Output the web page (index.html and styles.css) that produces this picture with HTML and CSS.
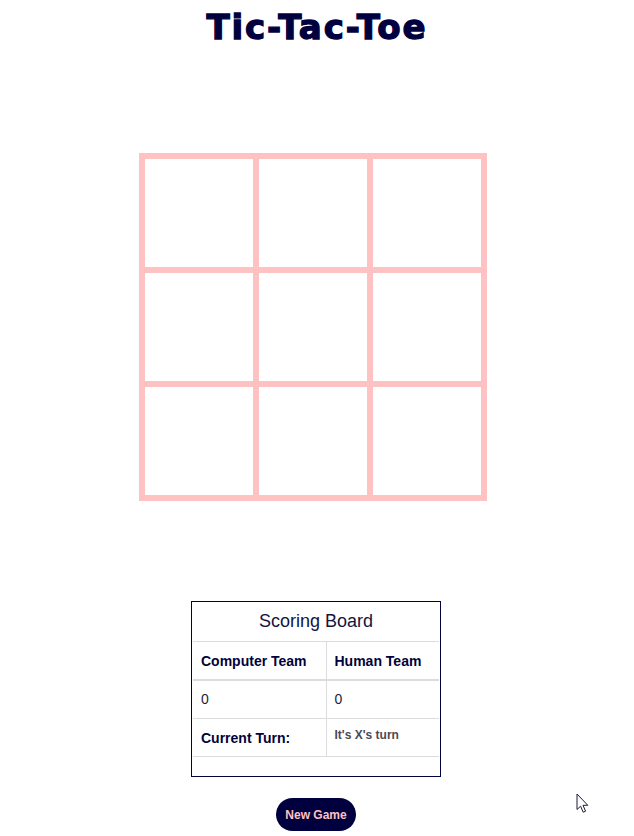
FILE: index.html
```html
<!DOCTYPE html>
<html lang="en">
<head>
<meta charset="utf-8">
<title>Tic-Tac-Toe</title>
<link rel="stylesheet" href="styles.css">
</head>
<body>
<h1 class="title">Tic-Tac-Toe</h1>
<div class="board">
  <div class="cell"></div><div class="cell"></div><div class="cell"></div>
  <div class="cell"></div><div class="cell"></div><div class="cell"></div>
  <div class="cell"></div><div class="cell"></div><div class="cell"></div>
</div>
<div class="score">
  <div class="score-title">Scoring Board</div>
  <table class="score-table">
    <colgroup><col class="col-a"><col class="col-b"></colgroup>
    <thead>
      <tr><th>Computer Team</th><th>Human Team</th></tr>
    </thead>
    <tbody>
      <tr><td>0</td><td>0</td></tr>
      <tr class="last"><th>Current Turn:</th><td class="turn">It's X's turn</td></tr>
    </tbody>
  </table>
</div>
<div class="actions"><button class="new-game">New Game</button></div>
<svg class="cursor" width="14" height="21" viewBox="0 0 14 21"><path d="M1 1 L1 16.5 L4.6 13.2 L7.2 19.2 L9.6 18.2 L7 12.3 L11.8 12.3 Z" fill="#fff" stroke="#1a1a3a" stroke-width="1" stroke-linejoin="miter"/></svg>
</body>
</html>
```

FILE: styles.css
```css
html, body {
  margin: 0;
  padding: 0;
  background: #fff;
}
body {
  font-family: "Liberation Sans", Arial, sans-serif;
  color: #02023a;
  position: relative;
  min-height: 836px;
}
.title {
  margin: 7px 0 0;
  font-family: "DejaVu Sans", "Liberation Sans", sans-serif;
  font-weight: 700;
  font-size: 34px;
  line-height: 40px;
  letter-spacing: 1.9px;
  text-align: center;
  color: #00003e;
  -webkit-text-stroke: 1.3px #00003e;
}
.board {
  width: 336px;
  margin: 106px 0 0 calc(50% - 178px);
  padding: 6px;
  background: #ffc2c2;
  display: grid;
  grid-template-columns: repeat(3, 108px);
  grid-template-rows: repeat(3, 108px);
  gap: 6px;
}
.cell {
  background: #fff;
}
.score {
  width: 248px;
  margin: 100px 0 0 calc(50% - 126px);
  border: 1px solid #02023f;
  padding: 0 0 19px;
}
.score-title {
  height: 39px;
  line-height: 38px;
  font-size: 18px;
  text-align: center;
  color: #14143e;
}
.score-table {
  width: 246px;
  margin: 0 0 0 1px;
  border-collapse: collapse;
  table-layout: fixed;
  font-size: 14px;
  line-height: 21px;
}
.col-a { width: 133px; }
.col-b { width: 113px; }
.score-table th,
.score-table td {
  padding: 8px;
  text-align: left;
  border: 1px solid #dcdcdc;
  border-left: 0;
  border-right: 0;
  vertical-align: middle;
}
.score-table th:first-child,
.score-table td:first-child {
  border-right: 1px solid #dcdcdc;
}
.score-table th {
  font-weight: 700;
  color: #02023a;
  padding-top: 9px;
  padding-bottom: 7px;
}
.score-table td {
  font-weight: 400;
  color: #1e1e3a;
}
.score-table thead th {
  border-bottom: 2px solid #dcdcdc;
}
.score-table td.turn {
  vertical-align: top;
  font-size: 12px;
  font-weight: 700;
  line-height: 14px;
  color: #4a4a55;
  padding-top: 9px;
}
.actions {
  display: flex;
  justify-content: center;
  margin-top: 21px;
}
.new-game {
  width: 80px;
  height: 33px;
  border: 0;
  border-radius: 17px;
  background: #00003e;
  color: #ffc2c2;
  font-family: "Liberation Sans", Arial, sans-serif;
  font-weight: 700;
  font-size: 12px;
  padding: 0;
  margin-left: -2px;
}
.cursor {
  position: absolute;
  left: 576px;
  top: 793px;
}
```
